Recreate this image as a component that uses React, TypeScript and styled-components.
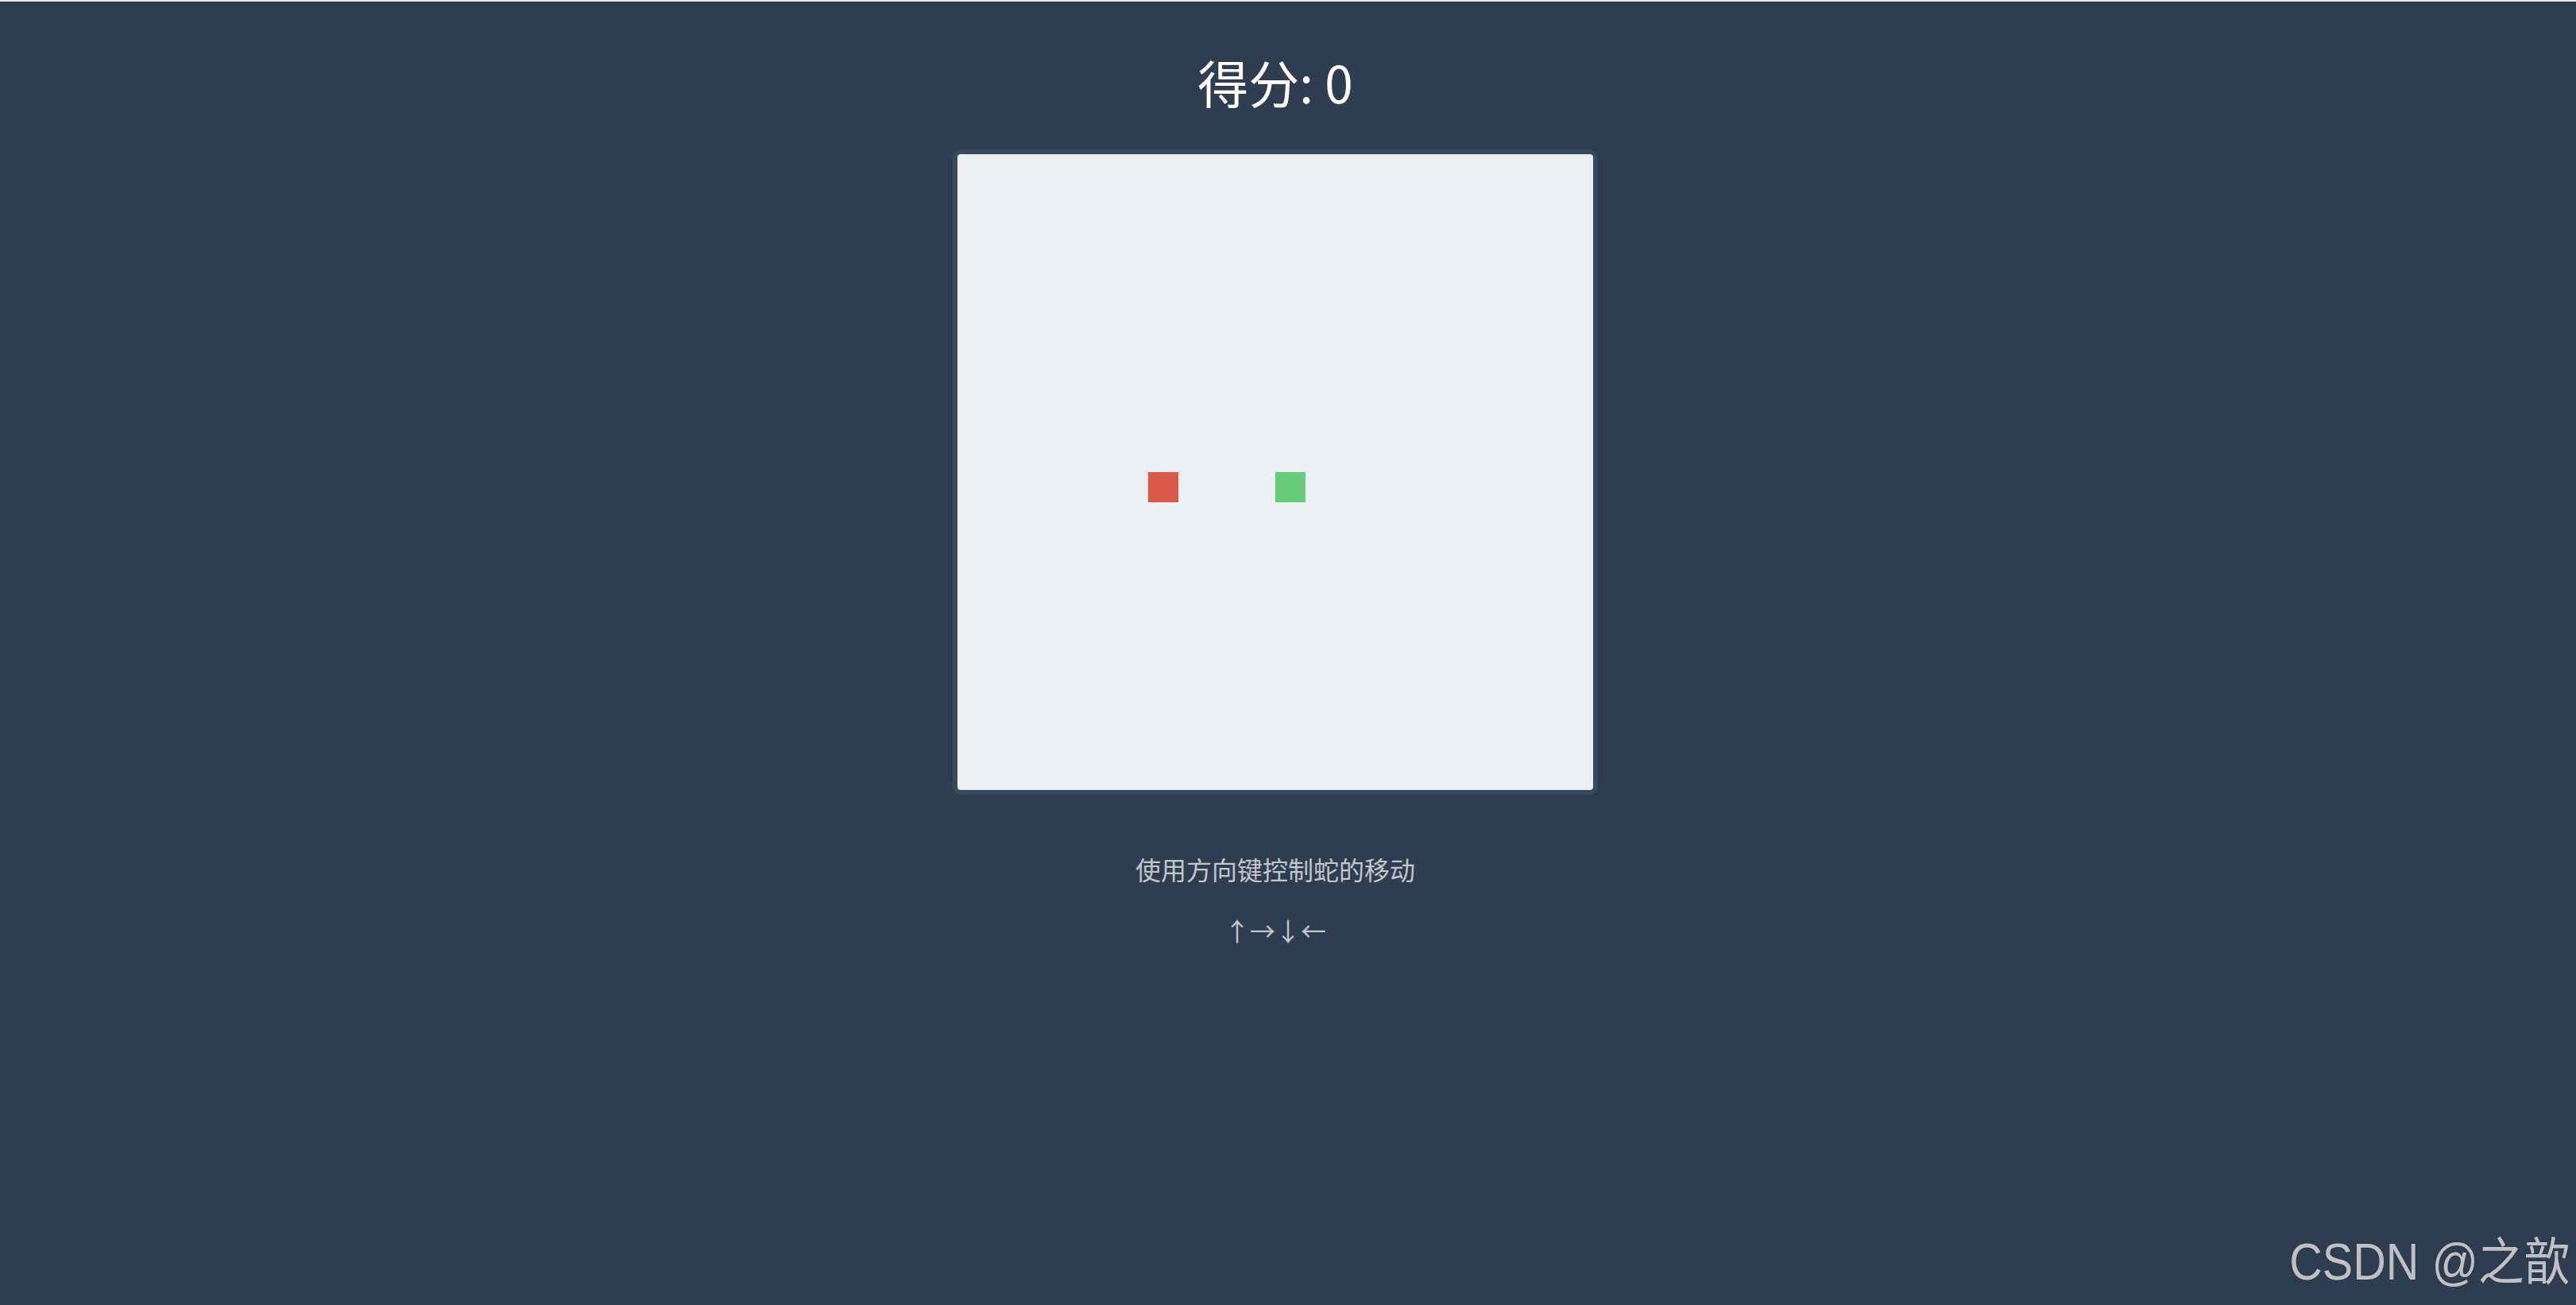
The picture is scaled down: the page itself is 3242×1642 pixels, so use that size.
import React, { useState } from 'react';
import styled, { createGlobalStyle } from 'styled-components';

const CELL = 40;
const GRID = 20;

type Point = { x: number; y: number };

const GlobalStyle = createGlobalStyle`
    html, body {
        margin: 0;
        padding: 0;
        background-color: #2f3d50;
    }

    body {
        border-top: 2px solid #e9e9e9;
        min-height: 1640px;
        font-family: "Noto Sans CJK SC", "Noto Sans", sans-serif;
    }
`;

const App: React.FC = () => {
    const [score] = useState(0);
    const [snake] = useState<Point[]>([{ x: 10, y: 10 }]);
    const [food] = useState<Point>({ x: 6, y: 10 });

    return (
        <>
            <GlobalStyle />
            <PageWrapper>
                <Title>得分: {score}</Title>
                <Board>
                    {snake.map((p, index) => (
                        <Block key={index} $x={p.x} $y={p.y} $color="#66cc7a" />
                    ))}
                    <Block $x={food.x} $y={food.y} $color="#d95a48" />
                </Board>
                <Hint>使用方向键控制蛇的移动</Hint>
                <Arrows>↑→↓←</Arrows>
            </PageWrapper>
            <Watermark>CSDN @之歆</Watermark>
        </>
    );
};

const PageWrapper = styled.div`
    display: flex;
    flex-direction: column;
    align-items: center;
    padding: 62px 32px 0 0;
`;

const Title = styled.h1`
    margin: 0 0 47px;
    font-size: 64px;
    font-weight: 400;
    line-height: 77px;
    color: #ffffff;
`;

const Board = styled.div`
    display: grid;
    grid-template-columns: repeat(${GRID}, ${CELL}px);
    grid-template-rows: repeat(${GRID}, ${CELL}px);
    background-color: #ebeff0;
    border: 6px solid #37495c;
    border-radius: 10px;
`;

const Block = styled.div<{ $x: number; $y: number; $color: string }>`
    grid-column: ${(p) => p.$x + 1};
    grid-row: ${(p) => p.$y + 1};
    margin: 0 2px 2px 0;
    background-color: ${(p) => p.$color};
`;

const Hint = styled.p`
    margin: 69px 0 0;
    font-size: 32px;
    line-height: 48px;
    color: #c3c7cc;
`;

const Arrows = styled.p`
    margin: 29px 0 0;
    font-size: 32px;
    line-height: 48px;
    color: #c3c7cc;
`;

const Watermark = styled.div`
    position: fixed;
    right: 8px;
    bottom: 14px;
    font-family: "Liberation Sans", "Noto Sans CJK SC", sans-serif;
    font-size: 64px;
    color: rgba(255, 255, 255, 0.7);
    text-shadow: 0 0 2px rgba(0, 0, 0, 0.3);
    transform: scaleX(0.9);
    transform-origin: right center;
`;

export default App;
